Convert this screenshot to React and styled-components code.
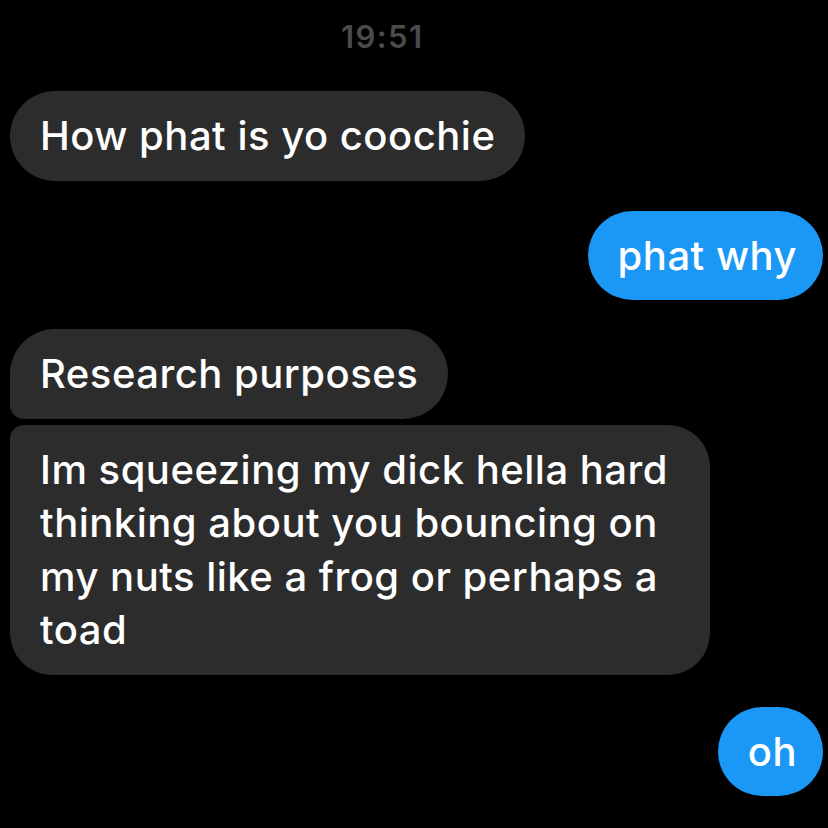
import React from "react";
import styled, { createGlobalStyle } from "styled-components";

const Global = createGlobalStyle`
  html, body { margin: 0; padding: 0; background: #000; }
  body { font-family: Inter, "Noto Sans", "Liberation Sans", sans-serif; -webkit-font-smoothing: antialiased; }
`;

const Screen = styled.div`
  width: 828px;
  height: 828px;
  overflow: hidden;
  background: #000;
  display: flex;
  flex-direction: column;
  padding: 0 5px 0 10px;
  box-sizing: border-box;
`;

const Time = styled.div`
  align-self: flex-start;
  margin: 19px 0 0 331px;
  font-size: 31px;
  font-weight: 600;
  color: #4b4b4b;
  line-height: 36px;
  letter-spacing: 1.4px;
`;

const Row = styled.div`
  display: flex;
  justify-content: ${(p) => (p.$me ? "flex-end" : "flex-start")};
  margin-top: ${(p) => p.$gap}px;
`;

const Bubble = styled.div`
  box-sizing: border-box;
  background: ${(p) => (p.$me ? "#1b98f5" : "#2c2c2c")};
  color: #fff;
  font-size: 40px;
  font-weight: 500;
  line-height: 53.5px;
  letter-spacing: 0.5px;
  padding: 18px ${(p) => p.$px || 30}px 18px 30px;
  border-radius: ${(p) => p.$radius || "45px"};
  min-height: 89px;
  white-space: nowrap;
`;

const Line = styled.span`
  display: block;
`;

export default function App() {
  return (
    <>
      <Global />
      <Screen>
        <Time>19:51</Time>
        <Row $gap={36}>
          <Bubble>How phat is yo coochie</Bubble>
        </Row>
        <Row $me $gap={30}>
          <Bubble $me $px={26}>phat why</Bubble>
        </Row>
        <Row $gap={29}>
          <Bubble $radius="45px 45px 45px 14px">Research purposes</Bubble>
        </Row>
        <Row $gap={6}>
          <Bubble $radius="14px 42px 42px 42px" $px={42}>
            {[
              "Im squeezing my dick hella hard",
              "thinking about you bouncing on",
              "my nuts like a frog or perhaps a",
              "toad",
            ].map((l) => (
              <Line key={l}>{l}</Line>
            ))}
          </Bubble>
        </Row>
        <Row $me $gap={32}>
          <Bubble $me $px={26}>oh</Bubble>
        </Row>
      </Screen>
    </>
  );
}
